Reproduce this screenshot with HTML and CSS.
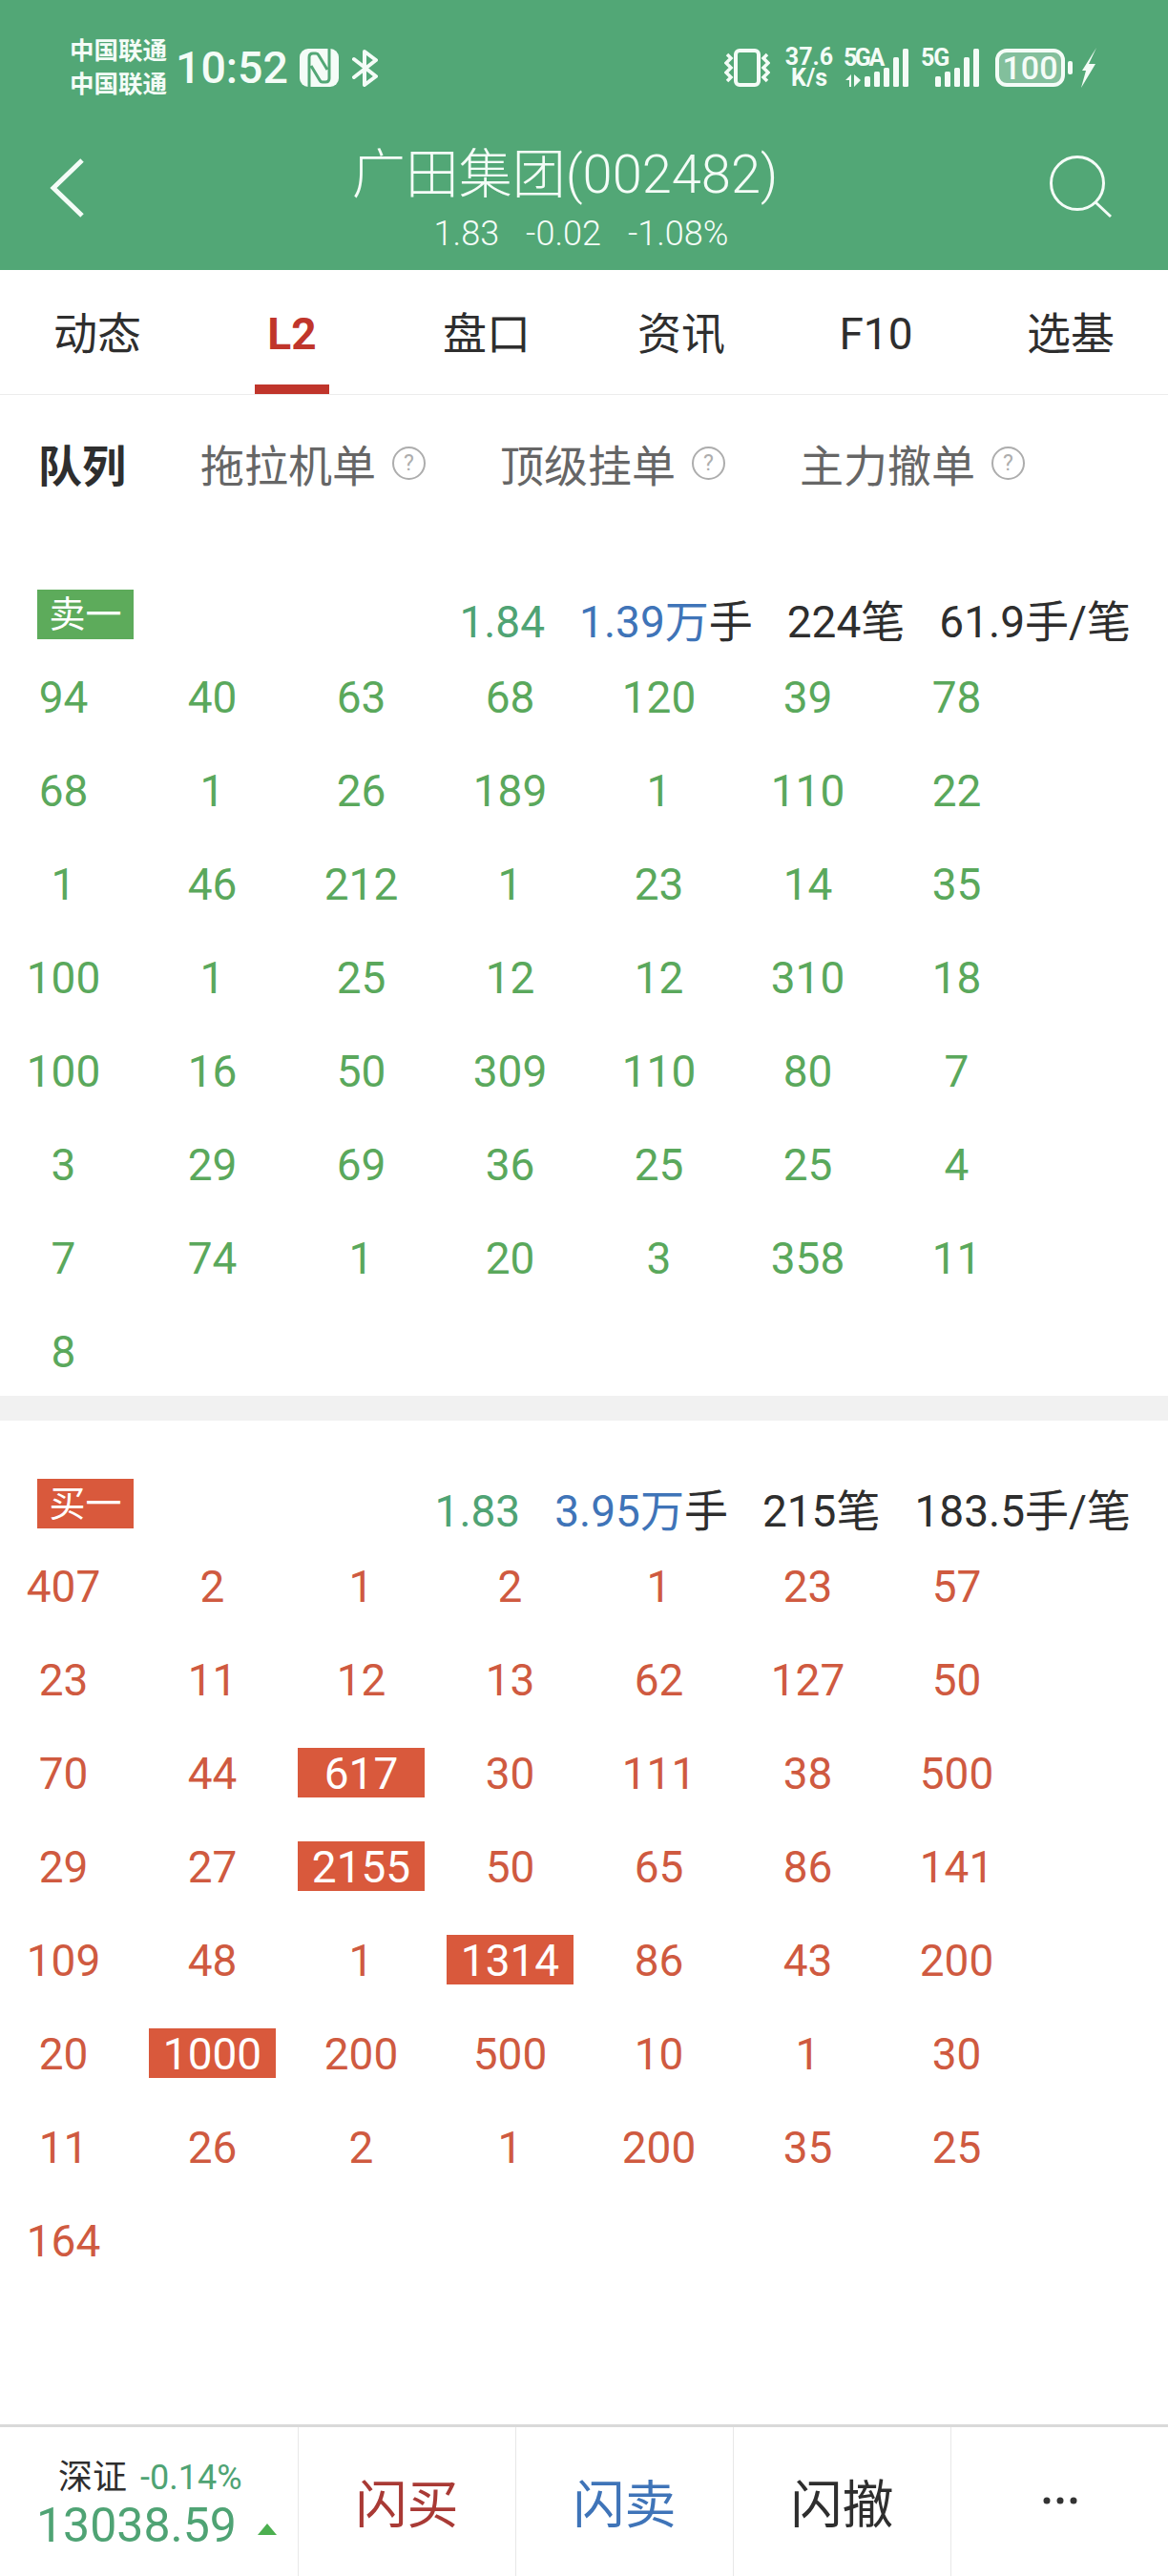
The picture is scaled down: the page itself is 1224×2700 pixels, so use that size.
FILE: index.html
```html
<!DOCTYPE html>
<html lang="zh-CN">
<head>
  <meta charset="UTF-8">
  <title>广田集团(002482)</title>
  <link rel="stylesheet" href="styles.css">
</head>
<body>
  <header class="top">
    <div class="status-bar">
      <div class="carrier"><div>中国联通</div><div>中国联通</div></div>
      <div class="clock">10:52</div>
      <svg class="ic-nfc" width="41" height="40" viewBox="0 0 41 40">
        <rect width="41" height="40" rx="9" fill="#f4fcf7"/>
        <path d="M10 40 V9 Q10 5 14 5 H17 Q19 5 20 7 L29 22 M31 0 V31 Q31 35 27 35 H24 Q22 35 21 33 L12 18" fill="none" stroke="#52a776" stroke-width="3"/>
      </svg>
      <svg class="ic-bt" width="27" height="39" viewBox="0 0 27 39">
        <path d="M2 10 L25 28 L13 37 V2 L25 11 L2 29" fill="none" stroke="#f4fcf7" stroke-width="4" stroke-linejoin="round" stroke-linecap="round"/>
      </svg>
      <div class="status-right">
        <svg class="ic-vibrate" width="48" height="40" viewBox="0 0 48 40">
          <rect x="12" y="2" width="24" height="36" rx="4" fill="none" stroke="#f4fcf7" stroke-width="4"/>
          <path d="M3 6 L7 10 L2 15 L7 20 L2 25 L7 30 L3 34 M45 6 L41 10 L46 15 L41 20 L46 25 L41 30 L45 34" fill="none" stroke="#f4fcf7" stroke-width="3.5"/>
        </svg>
        <div class="speed"><div>37.6</div><div>K/s</div></div>
        <div class="signal signal-ga">
          <div class="net-label">5GA</div>
          <svg class="signal-arrows" width="16" height="13" viewBox="0 0 16 13">
            <path d="M6 0 V13 H4 V6 H0 Z M9 0 V13 L16 6 Z" fill="#f4fcf7"/>
          </svg>
          <div class="bars"><i class="b1"></i><i class="b2"></i><i class="b3"></i><i class="b4"></i><i class="b5"></i></div>
        </div>
        <div class="signal signal-5g">
          <div class="net-label">5G</div>
          <div class="bars"><i class="b1"></i><i class="b2"></i><i class="b3"></i><i class="b4"></i><i class="b5"></i></div>
        </div>
        <div class="battery">100</div>
        <div class="battery-nub"></div>
        <svg class="ic-bolt" width="16" height="42" viewBox="0 0 16 42">
          <path d="M16 0 L8 17 H15 L0 42 L5 24 H1 Z" fill="#f4fcf7"/>
        </svg>
      </div>
    </div>
    <div class="navbar">
      <svg class="ic-back" width="36" height="62" viewBox="0 0 36 62">
        <path d="M34 2 L4 31 L34 60" fill="none" stroke="#f4fcf7" stroke-width="5"/>
      </svg>
      <div class="stock">
        <h1>广田集团(002482)</h1>
        <div class="stock-sub"><span>1.83</span><span>-0.02</span><span>-1.08%</span></div>
      </div>
      <svg class="ic-search" width="66" height="66" viewBox="0 0 66 66">
        <circle cx="29" cy="29" r="27.5" fill="none" stroke="#f4fcf7" stroke-width="3"/>
        <path d="M48 49 L64 64" fill="none" stroke="#f4fcf7" stroke-width="3"/>
      </svg>
    </div>
  </header>

  <nav class="tabs">
    <a href="#">动态</a>
    <a href="#" class="active">L2</a>
    <a href="#">盘口</a>
    <a href="#">资讯</a>
    <a href="#">F10</a>
    <a href="#">选基</a>
  </nav>

  <div class="subtabs">
    <a href="#" class="active">队列</a>
    <a href="#">拖拉机单<span class="help">?</span></a>
    <a href="#">顶级挂单<span class="help">?</span></a>
    <a href="#">主力撤单<span class="help">?</span></a>
  </div>

  <section class="queue sell">
    <div class="queue-head">
      <span class="badge">卖一</span>
      <div class="stats">
        <span class="price">1.84</span>
        <span><em>1.39万</em>手</span>
        <span>224笔</span>
        <span>61.9手/笔</span>
      </div>
    </div>
    <div class="cells">
      <span>94</span><span>40</span><span>63</span><span>68</span><span>120</span><span>39</span><span>78</span>
      <span>68</span><span>1</span><span>26</span><span>189</span><span>1</span><span>110</span><span>22</span>
      <span>1</span><span>46</span><span>212</span><span>1</span><span>23</span><span>14</span><span>35</span>
      <span>100</span><span>1</span><span>25</span><span>12</span><span>12</span><span>310</span><span>18</span>
      <span>100</span><span>16</span><span>50</span><span>309</span><span>110</span><span>80</span><span>7</span>
      <span>3</span><span>29</span><span>69</span><span>36</span><span>25</span><span>25</span><span>4</span>
      <span>7</span><span>74</span><span>1</span><span>20</span><span>3</span><span>358</span><span>11</span>
      <span>8</span>
    </div>
  </section>

  <div class="divider"></div>

  <section class="queue buy">
    <div class="queue-head">
      <span class="badge">买一</span>
      <div class="stats">
        <span class="price">1.83</span>
        <span><em>3.95万</em>手</span>
        <span>215笔</span>
        <span>183.5手/笔</span>
      </div>
    </div>
    <div class="cells">
      <span>407</span><span>2</span><span>1</span><span>2</span><span>1</span><span>23</span><span>57</span>
      <span>23</span><span>11</span><span>12</span><span>13</span><span>62</span><span>127</span><span>50</span>
      <span>70</span><span>44</span><span class="big">617</span><span>30</span><span>111</span><span>38</span><span>500</span>
      <span>29</span><span>27</span><span class="big">2155</span><span>50</span><span>65</span><span>86</span><span>141</span>
      <span>109</span><span>48</span><span>1</span><span class="big">1314</span><span>86</span><span>43</span><span>200</span>
      <span>20</span><span class="big">1000</span><span>200</span><span>500</span><span>10</span><span>1</span><span>30</span>
      <span>11</span><span>26</span><span>2</span><span>1</span><span>200</span><span>35</span><span>25</span>
      <span>164</span>
    </div>
  </section>

  <footer class="bottom">
    <div class="index">
      <div class="index-top"><span>深证</span><span class="index-pct">-0.14%</span></div>
      <div class="index-value"><span>13038.59</span><i class="arrow-up"></i></div>
    </div>
    <a href="#" class="action action-buy">闪买</a>
    <a href="#" class="action action-sell">闪卖</a>
    <a href="#" class="action">闪撤</a>
    <a href="#" class="action action-more">
      <svg width="36" height="8" viewBox="0 0 36 8">
        <circle cx="4" cy="4" r="3.5" fill="#333"/><circle cx="18" cy="4" r="3.5" fill="#333"/><circle cx="32" cy="4" r="3.5" fill="#333"/>
      </svg>
    </a>
  </footer>
</body>
</html>
```

FILE: styles.css
```css
* {
  box-sizing: border-box;
}
body {
  margin: 0;
  height: 2700px;
  display: flex;
  flex-direction: column;
  background: #fff;
  color: #2e2e2e;
  font-family: Roboto, "Noto Sans CJK SC", sans-serif;
}
a {
  color: inherit;
  text-decoration: none;
}
svg {
  display: block;
  flex: none;
}

/* top green part */
.top {
  background-color: #52a776;
  color: #f4fcf7;
  height: 283px;
}
.status-bar {
  height: 130px;
  padding: 12px 75px 0 73px;
  display: flex;
  align-items: center;
}
.carrier {
  width: 103px;
  font-size: 25.5px;
  font-weight: 700;
  line-height: 35px;
  white-space: nowrap;
}
.clock {
  margin-left: 8px;
  width: 115px;
  font-size: 46.5px;
  font-weight: 500;
}
.ic-nfc {
  margin-left: 15px;
}
.ic-bt {
  margin-left: 14px;
}
.status-right {
  margin-left: auto;
  display: flex;
  align-items: center;
}
.speed {
  margin-left: 15px;
  width: 52px;
  font-size: 25px;
  font-weight: 700;
  line-height: 22px;
  text-align: center;
  white-space: nowrap;
}
.signal {
  position: relative;
  height: 40px;
  display: flex;
  align-items: flex-end;
}
.signal-ga {
  margin-left: 10px;
  width: 68px;
}
.signal-5g {
  margin-left: 13px;
  width: 61px;
}
.net-label {
  position: absolute;
  left: 0;
  top: 0;
  font-size: 25px;
  font-weight: 700;
  line-height: 20px;
  letter-spacing: -2.5px;
  white-space: nowrap;
}
.signal-5g .net-label {
  letter-spacing: -1px;
}
.signal-arrows {
  margin: 0 4px 0 2px;
}
.signal-5g .bars {
  margin-left: 15px;
}
.bars {
  display: flex;
  align-items: flex-end;
  gap: 4.5px;
}
.bars i {
  display: block;
  width: 5.5px;
  background: #f4fcf7;
  border-radius: 1.5px;
}
.b1 { height: 11px; }
.b2 { height: 16px; }
.b3 { height: 20px; }
.b4 { height: 31px; }
.b5 { height: 40px; }
.battery {
  margin-left: 17px;
  width: 73px;
  height: 40px;
  border: 4px solid #f4fcf7;
  border-radius: 12px;
  background: rgba(255, 255, 255, 0.28);
  font-size: 34px;
  font-weight: 500;
  line-height: 32px;
  text-align: center;
}
.battery-nub {
  margin-left: 3px;
  width: 5px;
  height: 14px;
  background: #f4fcf7;
  border-radius: 2px;
}
.ic-bolt {
  margin-left: 9px;
}

.navbar {
  height: 153px;
  padding: 0 58px 0 52px;
  display: grid;
  grid-template-columns: 1fr auto 1fr;
  align-items: start;
}
.ic-back {
  margin-top: 36px;
}
.ic-search {
  margin-top: 33px;
  justify-self: end;
}
.stock {
  padding-top: 23px;
  text-align: center;
}
.stock h1 {
  margin: 0 34px 0 0;
  font-size: 56px;
  font-weight: 300;
  line-height: 60px;
  white-space: nowrap;
}
.stock-sub {
  margin-top: 12px;
  display: flex;
  justify-content: center;
  gap: 28px;
  font-size: 36px;
  font-weight: 300;
  line-height: 40px;
}

/* tabs */
.tabs {
  height: 131px;
  padding-top: 4px;
  display: grid;
  grid-template-columns: repeat(6, 1fr);
  align-items: center;
  text-align: center;
  border-bottom: 1px solid #ececec;
  font-size: 46px;
}
.tabs a {
  position: relative;
  line-height: 126px;
}
.tabs a.active {
  color: #c0352b;
  font-weight: 700;
}
.tabs a.active::after {
  content: "";
  position: absolute;
  left: 63px;
  bottom: 0;
  width: 78px;
  height: 10px;
  background: #c0352b;
}

.subtabs {
  height: 142px;
  padding-left: 40px;
  display: flex;
  align-items: center;
  gap: 78px;
  font-size: 46px;
  color: #666;
}
.subtabs a {
  display: flex;
  align-items: center;
  white-space: nowrap;
}
.subtabs a.active {
  color: #2e2e2e;
  font-weight: 700;
}
.help {
  margin-left: 17px;
  width: 35px;
  height: 35px;
  border: 2px solid #adadad;
  border-radius: 50%;
  color: #adadad;
  font-size: 23px;
  font-weight: 400;
  line-height: 31px;
  text-align: center;
}

/* queues */
.queue {
  padding-top: 62px;
}
.sell {
  padding-bottom: 21px;
}
.buy {
  padding-top: 61px;
}
.queue-head {
  height: 52px;
  padding: 0 39px;
  display: flex;
  justify-content: space-between;
  align-items: flex-start;
}
.badge {
  width: 101px;
  height: 52px;
  color: #fff;
  font-size: 38px;
  line-height: 52px;
  text-align: center;
}
.sell .badge {
  background: #5dab5b;
}
.buy .badge {
  background: #d9593c;
}
.stats {
  display: flex;
  gap: 36px;
  font-size: 46px;
  line-height: 68px;
  white-space: nowrap;
}
.stats em {
  font-style: normal;
  color: #3f74b8;
}
.stats .price {
  color: #4fa374;
}
.cells {
  margin-top: 34px;
  display: grid;
  grid-template-columns: repeat(7, 133px);
  grid-auto-rows: 52px;
  column-gap: 23px;
  row-gap: 46px;
  font-size: 46px;
  line-height: 55px;
  text-align: center;
}
.sell .cells {
  color: #5aa85c;
}
.buy .cells {
  color: #cf5a40;
}
.cells .big {
  background: #d9593c;
  color: #fff;
}
.divider {
  height: 26px;
  background: #f1f1f1;
}

/* bottom bar */
.bottom {
  margin-top: auto;
  height: 159px;
  border-top: 3px solid #d9d9d9;
  display: grid;
  grid-template-columns: 313px repeat(4, 228px);
}
.index {
  padding-top: 33px;
  border-right: 1px solid #e8e8e8;
}
.index-top {
  padding-left: 61px;
  display: flex;
  gap: 14px;
  font-size: 36px;
  line-height: 40px;
}
.index-pct {
  color: #4fa374;
}
.index-value {
  padding-left: 38px;
  display: flex;
  align-items: center;
  gap: 22px;
  color: #4fa374;
  font-size: 50px;
  line-height: 60px;
}
.arrow-up {
  margin-top: 8px;
  width: 0;
  height: 0;
  border-left: 10.5px solid transparent;
  border-right: 10.5px solid transparent;
  border-bottom: 12px solid #4caf50;
}
.action {
  display: flex;
  align-items: center;
  justify-content: center;
  padding-bottom: 2px;
  border-right: 1px solid #e8e8e8;
  font-size: 54px;
}
.action-buy {
  color: #a93a35;
}
.action-sell {
  color: #3f74b8;
}
.action-more {
  border-right: none;
}
```
